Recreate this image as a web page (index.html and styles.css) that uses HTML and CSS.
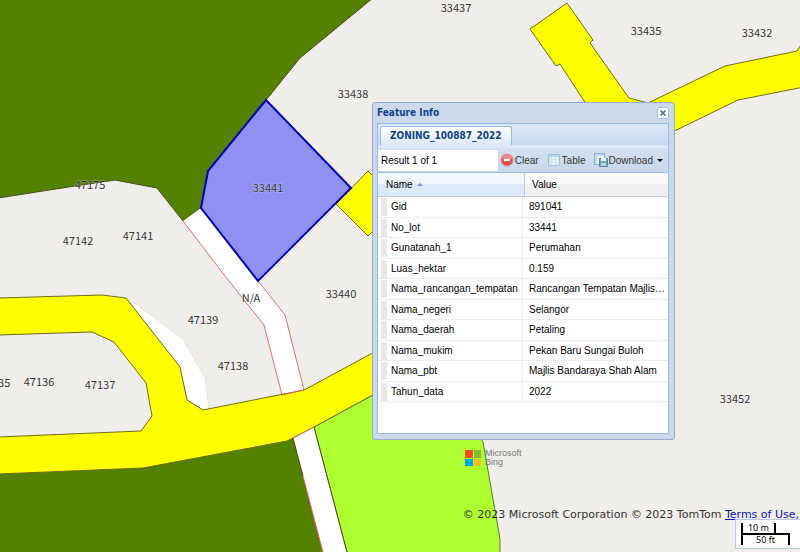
FILE: index.html
```
<!DOCTYPE html>
<html lang="en">
<head>
<meta charset="utf-8">
<title>Zoning map</title>
<link rel="stylesheet" href="styles.css">
</head>
<body>
<main class="map">
  <svg class="map-canvas" viewBox="0 0 800 552" preserveAspectRatio="xMinYMin slice" role="img" aria-label="Zoning lots">
    <path class="forest" d="M-2-2H373L300 58 266 100 208 171 201 208 183 221 157 188 115 180 75 186-2 198Z"/>
    <path class="lane" d="M201 208 183 221 225 276 264 325 282 395 304 390 285 315 258 281Z"/>
    <path class="lane-edge" d="M183 221 225 276 264 325 282 395 304 390 285 315 258 281"/>
    <path class="gap" d="M126 298 137 305 183 339 205 378 209 410H203L187 400 180 367Z"/>
    <path class="forest" d="M-2 473 145 468 290 438H293L303 476 325 560H-2Z"/>
    <path class="park" d="M314 427 373 395 480 438 483 442 500 539V560H349Z"/>
    <path class="lane" d="M293 438 314 427 349 560H325L303 476Z"/>
    <path class="road" fill-rule="evenodd" d="M-2 298 102 295 126 298 180 367 187 400 203 410 304 390 380 349V391L314 427 293 438 287 441 143 468-2 474ZM-2 335 92 332 114 342 146 383 152 416 141 431-2 437Z"/>
    <path class="lot-edge" d="M293 438 303 476M314 427 349 560"/>
    <path class="lane-edge" d="M282 395 304 390M293 438 314 427M303 476 325 560"/>
    <path class="road" d="M530 29 567 3 593 40 590 43 629 98 648 103 725 66 797 51 804 40V87L738 100 660 138 590 110 560 64 556 66Z"/>
    <path class="road" d="M336 204 368 171 400 204 368 236Z"/>
    <path class="selected-lot" d="M266 100 208 171 201 208 258 281 351 188Z"/>
    <g class="lot-labels">
      <text x="456" y="12">33437</text>
      <text x="646" y="35">33435</text>
      <text x="757" y="37">33432</text>
      <text x="353" y="98">33438</text>
      <text x="268" y="192">33441</text>
      <text x="90" y="189">47175</text>
      <text x="78" y="245">47142</text>
      <text x="138" y="240">47141</text>
      <text x="251" y="302">N/A</text>
      <text x="341" y="298">33440</text>
      <text x="203" y="324">47139</text>
      <text x="233" y="370">47138</text>
      <text x="39" y="386">47136</text>
      <text x="100" y="389">47137</text>
      <text x="-5" y="387">47135</text>
      <text x="735" y="403">33452</text>
    </g>
  </svg>

  <div class="bing">
    <svg class="bing-mark" viewBox="0 0 16 16" aria-hidden="true">
      <path fill="#f25022" d="M0 0h8v8H0z"/><path fill="#7fba3a" d="M9 0h7v8H9z"/>
      <path fill="#00a4df" d="M0 9h8v7H0z"/><path fill="#f4bd19" d="M9 9h7v7H9z"/>
    </svg>
    <span>Microsoft<br>Bing</span>
  </div>
  <p class="attribution">© 2023 Microsoft Corporation © 2023 TomTom <a href="#terms">Terms of Use,</a></p>
  <div class="scale">
    <div class="scale-bars">
      <span class="scale-metric">10 m</span>
      <span class="scale-imperial">50 ft</span>
    </div>
  </div>

  <section class="window" aria-labelledby="window-title">
    <header class="window-header">
      <h1 id="window-title">Feature Info</h1>
      <button class="close" aria-label="Close">
        <svg viewBox="0 0 12 12" aria-hidden="true"><path d="M3 3 9 9M9 3 3 9"/></svg>
      </button>
    </header>
    <div class="window-body">
      <nav class="tabs"><button class="tab">ZONING_100887_2022</button></nav>
      <div class="toolbar">
        <output class="result">Result 1 of 1</output>
        <button class="tool">
          <svg viewBox="0 0 14 14" aria-hidden="true"><circle cx="7" cy="7" r="6" fill="#e2554e" stroke="#d98a86"/><path fill="#ef8a82" d="M2 6a5 5 0 0 1 10 0Z"/><path fill="#fff" d="M4 6h6v2H4z"/></svg>
          Clear</button>
        <button class="tool">
          <svg viewBox="0 0 14 14" aria-hidden="true"><path fill="#e9f4fd" stroke="#9dbfe0" d="M1.500 1.500h11v11h-11z"/><path fill="#b5d5f2" d="M2 2h10v2H2z"/><path fill="#d3e8d6" d="M2 4h2v8H2z"/><path fill="none" stroke="#cfe2f2" d="M4.500 4v8M8.500 4v8M4 6.500h8M4 9.500h8"/></svg>
          Table</button>
        <button class="tool tool-menu">
          <svg viewBox="0 0 14 14" aria-hidden="true"><path fill="#e9f4fd" stroke="#86aed6" d="M.5.5h10v11H.5z"/><path fill="#b9d8f3" d="M1 1h9v2H1z"/><path fill="#c5e0c5" d="M1 3h2v8H1z"/><path fill="#6fa5d6" stroke="#5585b5" d="M5.500 5.500h8v8h-8z"/><path fill="#e9f6fb" d="M7 5h5v3H7z"/><path fill="#b5dbad" d="M7 10h5v3H7z"/></svg>
          Download</button>
      </div>
      <div class="grid">
        <table class="grid-head">
          <thead><tr><th class="col-name sorted">Name</th><th>Value</th></tr></thead>
        </table>
        <table class="grid-rows" aria-label="Feature attributes">
          <tbody>
            <tr><td class="col-name">Gid</td><td>891041</td></tr>
            <tr><td class="col-name">No_lot</td><td>33441</td></tr>
            <tr><td class="col-name">Gunatanah_1</td><td>Perumahan</td></tr>
            <tr><td class="col-name">Luas_hektar</td><td>0.159</td></tr>
            <tr><td class="col-name">Nama_rancangan_tempatan</td><td>Rancangan Tempatan Majlis…</td></tr>
            <tr><td class="col-name">Nama_negeri</td><td>Selangor</td></tr>
            <tr><td class="col-name">Nama_daerah</td><td>Petaling</td></tr>
            <tr><td class="col-name">Nama_mukim</td><td>Pekan Baru Sungai Buloh</td></tr>
            <tr><td class="col-name">Nama_pbt</td><td>Majlis Bandaraya Shah Alam</td></tr>
            <tr><td class="col-name">Tahun_data</td><td>2022</td></tr>
          </tbody>
        </table>
      </div>
    </div>
  </section>
</main>
</body>
</html>
```
FILE: styles.css
```
* { box-sizing: border-box; }
body { margin: 0; font: 10px/13px "Liberation Sans", Arial, sans-serif; color: #000; }
button { margin: 0; padding: 0; border: 0; background: none; font: inherit; color: inherit; }

.map { position: relative; height: 100vh; overflow: hidden; background: #efeeeb; }
.map-canvas { display: block; width: 100%; height: 100%; }
.forest { fill: #548200; stroke: #4a4a1c; }
.park { fill: #adff2f; stroke: #59752a; }
.road { fill: #ff0; stroke: #6e6e18; }
.lane, .gap { fill: #fff; }
.lot-edge { fill: none; stroke: #4a4a1c; }
.lane-edge { fill: none; stroke: #e8696b; }
.gap { stroke: #ece6da; }
.selected-lot { fill: #9090f2; stroke: #0000b4; stroke-width: 2; }
.lot-labels {
  font: 11px "Noto Sans CJK JP", sans-serif;
  text-anchor: middle; fill: #333;
  stroke: #fff; stroke-opacity: .4; stroke-width: 1; paint-order: stroke;
}

.bing {
  position: absolute; left: 465px; top: 449px;
  display: flex; align-items: center; gap: 4px;
  font: 9px/9px "Liberation Sans", Arial, sans-serif; color: #777;
}
.bing-mark { width: 16px; height: 16px; }
.attribution {
  position: absolute; right: 1px; bottom: 30px; margin: 0;
  font: 11px/14px "DejaVu Sans", Verdana, sans-serif; color: #333; white-space: nowrap;
}
.attribution a { color: #11b; }
.scale {
  position: absolute; right: 0; bottom: 3px; width: 65px; padding: 3px 5px;
  border: 1px solid #b9c8e4; border-right: 0; background: #fff;
  font: 9px/10px "Noto Sans", sans-serif; text-align: center;
}
.scale-bars { display: flex; flex-direction: column; width: 49px; border-left: 2px solid #000; }
.scale-metric { width: 33px; border-right: 2px solid #000; }
.scale-imperial { border-top: 2px solid #000; border-right: 2px solid #000; }

.window {
  position: absolute; left: 372px; top: 102px; width: 303px; height: 338px;
  display: flex; flex-direction: column; padding: 0 5px 5px 4px;
  border: 1px solid #99adc8; border-radius: 3px; background: #cbd9ea;
}
.window-header { display: flex; align-items: center; justify-content: space-between; height: 20px; }
.window-header h1, .tab { margin: 0; font: bold 10px/14px "DejaVu Sans Condensed", Tahoma, sans-serif; color: #15428b; }
.close { display: flex; width: 12px; height: 12px; border: 1px solid #a6c1e4; border-radius: 2px; background: #fff; }
.close svg { width: 10px; height: 10px; fill: none; stroke: #426da6; stroke-width: 2; }
.window-body { flex: 1; display: flex; flex-direction: column; border: 1px solid #99bbe8; background: #fff; }
.tabs { display: flex; padding: 2px 2px 0; height: 24px; border-bottom: 3px solid #dce8f7; background: linear-gradient(#dce8f7, #c8daf1); box-shadow: 0 1px #99bbe8; }
.tab { padding: 0 9px; border: 1px solid #99bbe8; border-bottom: 0; border-radius: 3px 3px 0 0; background: linear-gradient(#fff, #dce8f7); }
.toolbar { display: flex; align-items: center; gap: 8px; height: 25px; padding-right: 5px; background: linear-gradient(#d3e1f1, #c7d6e9); border-bottom: 1px solid #99bbe8; }
.result { flex: 1; margin-right: -6px; padding: 4px 0 4px 3px; background: #fff; }
.tool { display: flex; align-items: center; gap: 1px; color: #333; }
.tool svg { width: 14px; height: 14px; }
.tool-menu::after { content: ""; margin-left: 3px; border: 3px solid transparent; border-top-color: #111; border-bottom: 0; }

.grid { flex: 1; }
table { width: 100%; table-layout: fixed; border-collapse: separate; border-spacing: 0; }
.col-name { width: 145px; }
.grid-head { height: 24px; }
.grid-head th { padding: 0 7px; font-weight: normal; text-align: left; border-bottom: 1px solid #c5cfdc; background: linear-gradient(#fbfbfb 45%, #efeff0 50%); }
.grid-head .sorted { width: 147px; padding-left: 8px; border-right: 1px solid #b8cde6; background: linear-gradient(#f1f7fd 45%, #dce9f8 50%); }
.sorted::after { content: ""; display: inline-block; margin: 0 0 2px 4px; border: 3px solid transparent; border-bottom-color: #7295c1; border-top: 0; }
.grid-rows { height: 205px; }
.grid-rows td { padding: 0 6px; border-bottom: 1px solid #ededed; white-space: nowrap; }
.grid-rows .col-name { padding: 0 0 0 13px; border-right: 1px solid #ededed; background: linear-gradient(#e8e8e8, #e8e8e8) 3px 1px / 6px 18px no-repeat; }
```
